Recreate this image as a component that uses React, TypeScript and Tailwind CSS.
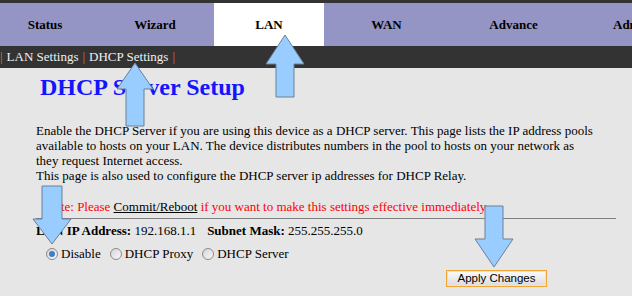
const tabs = [
  { label: "Status", cls: "w-[90px]" },
  { label: "Wizard", cls: "w-[124px] pl-[6px]" },
  { label: "LAN", cls: "w-[110px] bg-white", active: true },
  { label: "WAN", cls: "w-[125px]" },
  { label: "Advance", cls: "w-[129px]" },
];

function Radio({ checked }: { checked?: boolean }) {
  return (
    <span className="flex h-[12px] w-[12px] items-center justify-center rounded-full border border-[#8a8a8a] bg-gradient-to-br from-[#d4d4d4] to-[#fafafa]">
      {checked && <span className="h-[6px] w-[6px] rounded-full bg-[#3d7fc4]" />}
    </span>
  );
}

function Arrows() {
  // the blue callout arrows drawn over the page
  const fill = "#99ccff";
  const stroke = "#6a8099";
  return (
    <svg className="pointer-events-none absolute inset-0" width="632" height="296">
      <polygon points="135,63 153,89 144,89 144,126 126,126 126,89 117,89" fill={fill} stroke={stroke} />
      <polygon points="285,35 304,64 294,64 294,97 276,97 276,64 266,64" fill={fill} stroke={stroke} />
      <polygon points="42,186 62,186 62,219 71,219 52,244 33,219 42,219" fill={fill} stroke={stroke} />
      <polygon points="485,206 503,206 503,239 513,239 494,267 475,239 485,239" fill={fill} stroke={stroke} />
    </svg>
  );
}

export default function App() {
  return (
    <div className="relative h-[296px] w-[632px] overflow-hidden bg-[#e6e6e6] font-[family-name:Liberation_Serif,serif] text-[13px] text-black">
      <div className="h-[3px] bg-[#333333]" />
      <nav className="flex h-[43px] bg-[#9595c5] font-bold">
        {tabs.map((t) => (
          <div key={t.label} className={`flex shrink-0 items-center justify-center ${t.cls}`}>
            {t.label}
          </div>
        ))}
        <div className="flex shrink-0 items-center whitespace-nowrap pl-[35px]">Administration</div>
      </nav>
      <div className="flex h-[22px] items-center whitespace-nowrap bg-[#333333] text-[#f0f0f0]">
        <span className="text-[#d9782d]">|</span>
        <span className="ml-[4px]">LAN Settings</span>
        <span className="ml-[4px] text-[#d9782d]">|</span>
        <span className="ml-[4px]">DHCP Settings</span>
        <span className="ml-[4px] text-[#d9782d]">|</span>
      </div>

      <div className="pl-[36px]">
        <h1 className="ml-[4px] mt-[7px] text-[24px] font-bold leading-[24px] text-[#1414ff]">DHCP Server Setup</h1>
        <p className="mt-[24px] whitespace-nowrap leading-[15px]">
          Enable the DHCP Server if you are using this device as a DHCP server. This page lists the IP address pools
          <br />
          available to hosts on your LAN. The device distributes numbers in the pool to hosts on your network as
          <br />
          they request Internet access.
          <br />
          This page is also used to configure the DHCP server ip addresses for DHCP Relay.
        </p>
        <p className="ml-[9px] mt-[16px] leading-[15px] text-[#ff0000]">
          Note: Please{" "}
          <span className="text-black underline">Commit/Reboot</span> if you want to make this settings effective
          immediately.
        </p>
        <div className="mt-[4px] h-px w-[580px] bg-[#808080]" />
        <div className="mt-[4px] flex h-[15px] items-center gap-[11px] whitespace-nowrap">
          <span>
            <b>LAN IP Address:</b> 192.168.1.1
          </span>
          <span>
            <b>Subnet Mask:</b> 255.255.255.0
          </span>
        </div>
        <div className="ml-[10px] mt-[8px] flex h-[15px] items-center whitespace-nowrap">
          <Radio checked />
          <span className="ml-[3px]">Disable</span>
          <span className="ml-[9px]">
            <Radio />
          </span>
          <span className="ml-[3px]">DHCP Proxy</span>
          <span className="ml-[9px]">
            <Radio />
          </span>
          <span className="ml-[3px]">DHCP Server</span>
        </div>
        <div className="ml-[410px] mt-[9px]">
          <button className="flex h-[17px] w-[101px] items-center justify-center border border-[#f2a530] bg-gradient-to-b from-[#fbfbfb] to-[#dcdcdc] font-[family-name:Liberation_Sans,sans-serif] text-[11.5px] text-black shadow-[inset_0_0_0_1px_#fde2b0]">
            Apply Changes
          </button>
        </div>
      </div>
      <Arrows />
    </div>
  );
}
